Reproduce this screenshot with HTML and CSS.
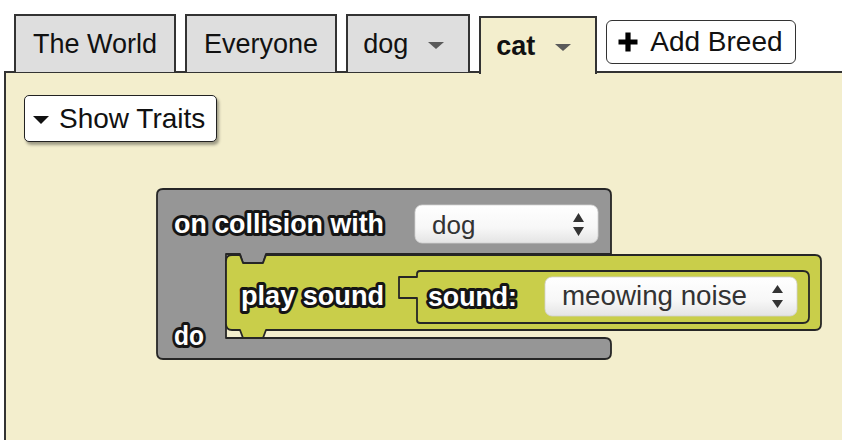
FILE: index.html
```html
<!DOCTYPE html>
<html lang="en">
<head>
<meta charset="utf-8">
<title>Breeds</title>
<link rel="stylesheet" href="styles.css">
</head>
<body>
<div class="app">
  <div class="tabs">
    <div class="tab">The World</div>
    <div class="tab">Everyone</div>
    <div class="tab tab--menu">dog<span class="caret"></span></div>
    <div class="tab tab--menu tab--active">cat<span class="caret"></span></div>
    <button class="add-breed">
      <svg class="plus" width="22" height="22" viewBox="0 0 22 22"><path d="M11 1.5V20.5M1.5 11H20.5" stroke="#000" stroke-width="5.2" fill="none"/></svg>
      Add Breed
    </button>
  </div>
  <div class="panel">
    <button class="traits"><span class="tri"></span>Show Traits</button>
    <svg class="block" width="672" height="176" viewBox="0 0 672 176">
      <defs>
        <linearGradient id="dd" x1="0" y1="0" x2="0" y2="1">
          <stop offset="0" stop-color="#ffffff"/>
          <stop offset="0.6" stop-color="#f7f7f7"/>
          <stop offset="1" stop-color="#e4e4e4"/>
        </linearGradient>
      </defs>
      <g transform="translate(-155 -187)">
        <path class="blk-gray" d="M157,195 Q157,189 163,189 H605 Q611,189 611,195 V254 H266 L263,263 H243 L240,254 H226 V338 H605 Q611,338 611,344 V353 Q611,359 605,359 H163 Q157,359 157,353 Z"/>
        <path class="blk-yellow" d="M226,261 Q226,255 232,255 H240 L243,263 H263 L266,255 H815 Q821,255 821,261 V324 Q821,330 815,330 H266 L263,338 H243 L240,330 H232 Q226,330 226,324 Z"/>
        <path class="blk-yellow" d="M417,277 H399 V298 H417 V320 Q417,323 420,323 H803 Q809,323 809,317 V277 Q809,271 803,271 H420 Q417,271 417,274 Z"/>

        <text class="blk-label" x="174" y="233" textLength="210" lengthAdjust="spacingAndGlyphs">on collision with</text>
        <rect class="dropdown" x="415" y="205" width="183" height="38" rx="7"/>
        <text class="dd-text" x="432" y="234">dog</text>
        <path class="dd-arrow" d="M573,222 H584 L578.5,213 Z M573,227 H584 L578.5,236 Z"/>

        <text class="blk-label" x="241" y="305" textLength="143" lengthAdjust="spacingAndGlyphs">play sound</text>
        <text class="blk-label" x="428" y="306" textLength="89" lengthAdjust="spacingAndGlyphs">sound:</text>
        <rect class="dropdown" x="545" y="277" width="252" height="39" rx="7"/>
        <text class="dd-text dd-text--lg" x="562" y="305" textLength="185" lengthAdjust="spacingAndGlyphs">meowing noise</text>
        <path class="dd-arrow" d="M772,293 H783 L777.5,285 Z M772,300 H783 L777.5,308 Z"/>

        <text class="blk-label" x="174" y="345" textLength="30" lengthAdjust="spacingAndGlyphs">do</text>
      </g>
    </svg>
  </div>
</div>
</body>
</html>
```

FILE: styles.css
```css
html, body {
  margin: 0;
  padding: 0;
  background: #ffffff;
  overflow: hidden;
}

.app {
  width: 842px;
  height: 440px;
  font-family: "Liberation Sans", Arial, Helvetica, sans-serif;
  color: #111;
}

.tabs {
  display: flex;
  align-items: flex-end;
  gap: 9px;
  height: 72px;
  box-sizing: border-box;
  padding: 14px 0 0 14px;
}

.tab {
  display: flex;
  align-items: center;
  box-sizing: border-box;
  height: 58px;
  padding: 0 17px;
  background: #dedede;
  border: 2px solid #333;
  border-bottom: none;
  font-size: 27px;
  color: #111;
  white-space: nowrap;
}

.tab--menu {
  padding: 0 24px 0 15px;
}

.tab--active {
  position: relative;
  z-index: 1;
  margin-bottom: -2px;
  background: #f3eecd;
  font-weight: bold;
}

.caret {
  width: 0;
  height: 0;
  margin-left: 20px;
  margin-top: 3px;
  border-left: 8.5px solid transparent;
  border-right: 8.5px solid transparent;
  border-top: 7px solid #5a5a5a;
}

.add-breed {
  align-self: flex-start;
  margin-top: 6px;
  display: flex;
  align-items: center;
  gap: 11px;
  box-sizing: border-box;
  height: 44px;
  padding: 0 12px 0 10px;
  background: #ffffff;
  border: 1.5px solid #333;
  border-radius: 6px;
  font-family: "Liberation Sans", Arial, Helvetica, sans-serif;
  font-size: 28px;
  color: #111;
}

.plus {
  display: block;
}

.panel {
  display: flex;
  flex-direction: column;
  align-items: flex-start;
  margin: -1px 0 0 4px;
  height: 369px;
  box-sizing: border-box;
  background: #f3eecd;
  border-left: 2px solid #333;
  border-top: 2px solid #333;
}

.traits {
  display: flex;
  align-items: center;
  gap: 10px;
  margin: 22px 0 0 18px;
  box-sizing: border-box;
  height: 47px;
  padding: 0 11px 0 8px;
  background: #ffffff;
  border: 1.5px solid #222;
  border-radius: 5px;
  box-shadow: 2px 3px 3px rgba(0, 0, 0, 0.35);
  font-family: "Liberation Sans", Arial, Helvetica, sans-serif;
  font-size: 28px;
  color: #111;
}

.tri {
  width: 0;
  height: 0;
  margin-top: 2px;
  border-left: 8.5px solid transparent;
  border-right: 8.5px solid transparent;
  border-top: 8px solid #111;
}

.block {
  display: block;
  margin: 45px 0 0 149px;
  overflow: visible;
}

.blk-gray {
  fill: #969696;
  stroke: #262626;
  stroke-width: 1.8;
  stroke-linejoin: round;
}

.blk-yellow {
  fill: #c9ce4a;
  stroke: #262626;
  stroke-width: 1.8;
  stroke-linejoin: round;
}

.blk-label {
  font-family: "Liberation Sans", Arial, sans-serif;
  font-weight: bold;
  font-size: 27px;
  fill: #ffffff;
  stroke: #151515;
  stroke-width: 6px;
  stroke-linejoin: round;
  paint-order: stroke;
}

.dropdown {
  fill: url(#dd);
  stroke: #d2d2d2;
  stroke-width: 0.8;
}

.dd-text {
  font-family: "Liberation Sans", Arial, sans-serif;
  font-size: 26px;
  fill: #333;
}

.dd-text--lg {
  font-size: 27px;
}

.dd-arrow {
  fill: #333;
}
```
